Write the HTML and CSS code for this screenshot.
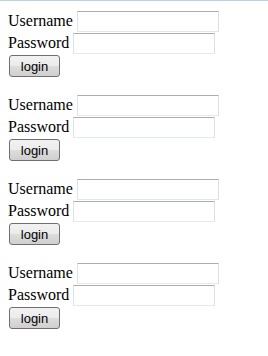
FILE: index.html
```html
<!DOCTYPE html>
<html lang="en">
<head>
    <meta charset="UTF-8">
    <title>Login</title>
    <link rel="stylesheet" href="styles.css">
</head>
<body>
    <form class="login-form">
        <div class="form-row"><span>Username</span><input type="text" class="user-input"></div>
        <div class="form-row"><span>Password</span><input type="password" class="pass-input"></div>
        <div class="button-row"><button type="button">login</button></div>
    </form>
    <form class="login-form">
        <div class="form-row"><span>Username</span><input type="text" class="user-input"></div>
        <div class="form-row"><span>Password</span><input type="password" class="pass-input"></div>
        <div class="button-row"><button type="button">login</button></div>
    </form>
    <form class="login-form">
        <div class="form-row"><span>Username</span><input type="text" class="user-input"></div>
        <div class="form-row"><span>Password</span><input type="password" class="pass-input"></div>
        <div class="button-row"><button type="button">login</button></div>
    </form>
    <form class="login-form">
        <div class="form-row"><span>Username</span><input type="text" class="user-input"></div>
        <div class="form-row"><span>Password</span><input type="password" class="pass-input"></div>
        <div class="button-row"><button type="button">login</button></div>
    </form>
</body>
</html>
```

FILE: styles.css
```css
html {
    background-color: white;
}

body {
    margin: 0;
    padding: 9px 8px 0 8px;
    border-top: 1px solid #b9d1ea;
    font-family: "Liberation Serif", "Times New Roman", serif;
    font-size: 16px;
    color: black;
}

.login-form {
    margin: 0 0 16px 0;
}

.form-row {
    display: flex;
    align-items: center;
    gap: 4px;
    height: 22px;
    line-height: 22px;
}

.form-row input {
    box-sizing: border-box;
    width: 142px;
    height: 21px;
    margin: 0;
    padding: 1px 2px;
    border: 1px solid;
    border-color: #abadb3 #dbdfe6 #e3e9ef #e2e3ea;
    background: white;
    font-size: 13px;
}

.button-row {
    height: 24px;
    padding-top: 1px;
    box-sizing: border-box;
}

button {
    box-sizing: border-box;
    width: 51px;
    height: 22px;
    margin: 0 0 0 1px;
    padding: 0;
    border: 1px solid #707070;
    border-radius: 3px;
    background: linear-gradient(to bottom, #f2f2f2 0%, #ebebeb 50%, #dddddd 51%, #cfcfcf 100%);
    font-family: "Liberation Sans", Arial, sans-serif;
    font-size: 13px;
    color: black;
    cursor: pointer;
}
```
